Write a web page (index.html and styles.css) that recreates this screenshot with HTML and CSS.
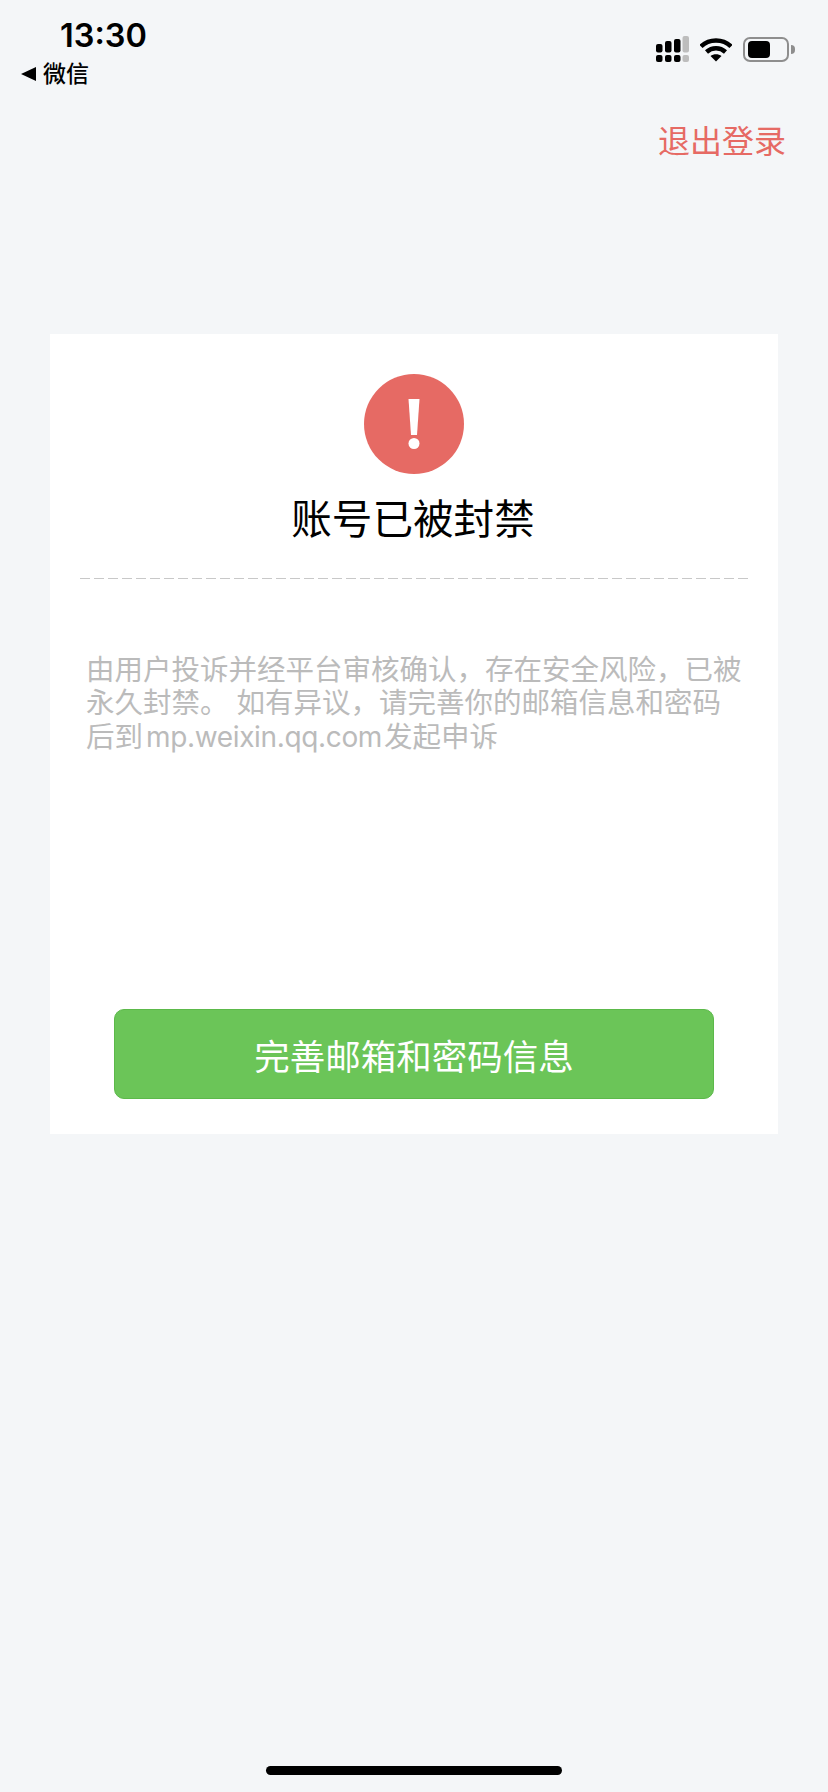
FILE: index.html
```html
<!DOCTYPE html>
<html lang="zh-CN">
<head>
    <meta charset="UTF-8">
    <meta name="viewport" content="width=device-width, initial-scale=1.0">
    <title>账号已被封禁</title>
    <link rel="stylesheet" href="styles.css">
</head>
<body>
    <div class="page">
        <div class="status-bar">
            <div class="status-left">
                <div class="time">13:30</div>
                <div class="back"><span class="back-arrow"></span>微信</div>
            </div>
            <div class="status-right">
                <svg class="signal" width="34" height="27" viewBox="0 0 34 27">
                    <g fill="#000">
                        <rect x="1" y="8" width="6.500" height="8.500" rx="2"/>
                        <rect x="10" y="5" width="6.500" height="11.500" rx="2"/>
                        <rect x="19" y="3" width="6.500" height="13.500" rx="2"/>
                        <rect x="1" y="19" width="6.500" height="7" rx="2"/>
                        <rect x="10" y="19" width="6.500" height="7" rx="2"/>
                        <rect x="19" y="19" width="6.500" height="7" rx="2"/>
                    </g>
                    <g fill="#bdbdbd">
                        <rect x="27.500" y="0" width="6.500" height="16.500" rx="2"/>
                        <rect x="27.500" y="19" width="6.500" height="7" rx="2"/>
                    </g>
                </svg>
                <svg class="wifi" width="32" height="24" viewBox="0 0 32 24">
                    <path d="M1 8.500C9 0.500 23 0.500 31 8.500" fill="none" stroke="#000" stroke-width="4.500"/>
                    <path d="M6.500 14C12 9 20 9 25.500 14" fill="none" stroke="#000" stroke-width="4.500"/>
                    <path d="M10.500 18C13.500 15.500 18.500 15.500 21.500 18L16 23.500Z" fill="#000"/>
                </svg>
                <div class="battery">
                    <div class="battery-body"><div class="battery-level"></div></div>
                    <div class="battery-cap"></div>
                </div>
            </div>
        </div>

        <div class="top-action"><a class="logout">退出登录</a></div>

        <div class="card">
            <svg class="alert-icon" width="100" height="100" viewBox="0 0 100 100">
                <circle cx="50" cy="50" r="50" fill="#e66a64"/>
                <path d="M44.500 25H55.500L53 61H47Z" fill="#fff"/>
                <circle cx="50" cy="69.500" r="5.500" fill="#fff"/>
            </svg>
            <h1 class="title">账号已被封禁</h1>
            <div class="divider"></div>
            <p class="message">由用户投诉并经平台审核确认，存在安全风险，已被永久封禁。 如有异议，请完善你的邮箱信息和密码后到<span class="site">mp.weixin.qq.com</span>发起申诉</p>
            <button class="primary-btn">完善邮箱和密码信息</button>
        </div>

        <div class="home-indicator"></div>
    </div>
</body>
</html>
```

FILE: styles.css
```css
* {
    box-sizing: border-box;
}
body {
    margin: 0;
    background: #f4f6f8;
    font-family: Inter, "Noto Sans CJK SC", sans-serif;
}
.page {
    height: 1792px;
    display: flex;
    flex-direction: column;
    align-items: center;
}
.status-bar {
    width: 100%;
    height: 88px;
    display: flex;
    justify-content: space-between;
}
.status-left {
    padding: 16px 0 0 21px;
}
.time {
    margin-left: 39px;
    font-size: 32.500px;
    line-height: 40px;
    font-weight: 600;
    color: #000;
}
.back {
    display: flex;
    align-items: center;
    margin-top: 2px;
    font-size: 23px;
    line-height: 32px;
    font-weight: 500;
    color: #000;
}
.back-arrow {
    width: 0;
    height: 0;
    margin-right: 7px;
    border-top: 7.500px solid transparent;
    border-bottom: 7.500px solid transparent;
    border-right: 15px solid #000;
}
.status-right {
    display: flex;
    align-items: center;
    gap: 11px;
    height: 47px;
    margin-top: 26px;
    padding-right: 33px;
}
.battery {
    display: flex;
    align-items: center;
}
.battery-body {
    width: 46px;
    height: 25px;
    padding: 2px 3px;
    border: 2px solid #8e8e8e;
    border-radius: 7px;
}
.battery-level {
    width: 22px;
    height: 100%;
    background: #000;
    border-radius: 4px;
}
.battery-cap {
    width: 4px;
    height: 9px;
    margin-left: 2px;
    background: #8e8e8e;
    border-radius: 0 4px 4px 0;
}
.top-action {
    width: 100%;
    margin-top: 31px;
    padding-right: 42px;
    text-align: right;
}
.logout {
    font-size: 32px;
    line-height: 46px;
    color: #e66a64;
}
.card {
    width: 728px;
    height: 800px;
    margin-top: 169px;
    padding: 40px 30px 0;
    background: #fff;
    display: flex;
    flex-direction: column;
    align-items: center;
}
.alert-icon {
    flex: none;
}
.title {
    margin: 16px 2px 0 0;
    font-size: 40.600px;
    line-height: 60px;
    font-weight: 400;
    color: #000;
}
.divider {
    width: 100%;
    height: 1px;
    margin-top: 28px;
    background: repeating-linear-gradient(to right, #c8c8c8 0, #c8c8c8 10px, transparent 10px, transparent 14px);
}
.message {
    width: 100%;
    height: 356px;
    margin: 74px 0 0;
    padding: 0 0 0 6px;
    font-size: 28.500px;
    line-height: 33.400px;
    color: #bbbbbb;
}
.site {
    margin: 0 2px 0 3px;
    font-size: 28px;
    letter-spacing: -0.35px;
}
.primary-btn {
    width: 600px;
    height: 90px;
    background: #6bc558;
    border: 1px solid #5cb94a;
    border-radius: 10px;
    color: #fff;
    font-family: inherit;
    font-size: 35.500px;
}
.home-indicator {
    width: 296px;
    height: 9px;
    margin-top: auto;
    margin-bottom: 17px;
    background: #000;
    border-radius: 5px;
}
```
